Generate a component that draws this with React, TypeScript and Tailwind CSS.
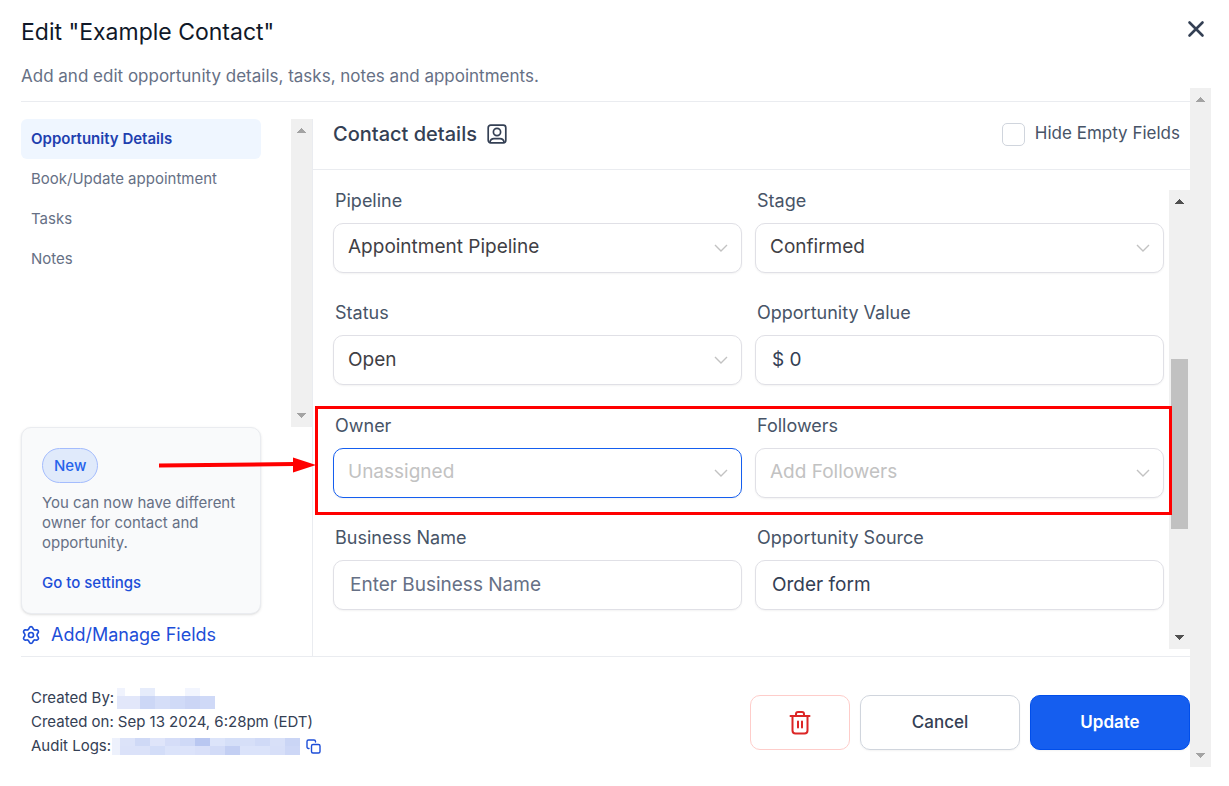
import { useState } from "react";
import type { ReactNode } from "react";

function ScrollArrow({ up, dark }: { up?: boolean; dark?: boolean }) {
  return (
    <svg
      width="9"
      height="5"
      viewBox="0 0 9 5"
      shapeRendering="crispEdges"
      className={dark ? "text-[#505050]" : "text-[#a3a3a3]"}
      aria-hidden="true"
    >
      <path d={up ? "M4.5 0 9 5H0z" : "M0 0H9L4.5 5z"} fill="currentColor" />
    </svg>
  );
}

function ScrollRail({ dark, children }: { dark?: boolean; children?: ReactNode }) {
  return (
    <div className="flex w-[21px] shrink-0 flex-col items-center justify-between bg-[#f0f0f0] pt-[9px] pb-[9px]" aria-hidden="true">
      <ScrollArrow up dark={dark} />
      {children}
      <ScrollArrow dark={dark} />
    </div>
  );
}

function Chevron() {
  return (
    <svg
      width="14"
      height="8"
      viewBox="0 0 14 8"
      fill="none"
      stroke="#c2c2c2"
      strokeWidth="1.4"
      className="pointer-events-none absolute top-[21px] right-[14px]"
      aria-hidden="true"
    >
      <path d="M1 1l6 6 6-6" />
    </svg>
  );
}

const label = "pl-[2px] text-[18px] leading-[22px] text-[#475467]";
const box = "h-[50px] w-full rounded-[10px] border bg-white pb-px text-[19px] shadow-xs outline-none";

function SelectField({
  id,
  name,
  options,
  placeholder,
  active,
}: {
  id: string;
  name: string;
  options: string[];
  placeholder?: boolean;
  active?: boolean;
}) {
  return (
    <div className="flex min-w-0 flex-col gap-[11px]">
      <label htmlFor={id} className={label}>
        {name}
      </label>
      <div className="relative">
        <select
          id={id}
          className={`${box} appearance-none pr-9 pl-[14px] ${active ? "border-[#155eef]" : "border-[#e0e0e6]"} ${placeholder ? "text-[#c2c2c2]" : "text-[#3f4045]"}`}
        >
          {options.map((o) => (
            <option key={o}>{o}</option>
          ))}
        </select>
        <Chevron />
      </div>
    </div>
  );
}

function TextField({ id, name, value, placeholder }: { id: string; name: string; value?: string; placeholder?: string }) {
  return (
    <div className="flex min-w-0 flex-col gap-[11px]">
      <label htmlFor={id} className={label}>
        {name}
      </label>
      <input
        id={id}
        type="text"
        defaultValue={value}
        placeholder={placeholder}
        className={`${box} border-[#e0e0e6] px-4 text-[#344054] placeholder:text-[#667085]`}
      />
    </div>
  );
}

const tabs = ["Opportunity Details", "Book/Update appointment", "Tasks", "Notes"];

type Cell = [number, number, number, number, string];

const creatorCells: Cell[] = [
  [0, 0, 8, 8, "#f0f3fd"],
  [23, 0, 15, 8, "#e6ecfb"],
  [68, 0, 15, 8, "#f2f5fe"],
  [0, 8, 23, 13, "#e2e7fa"],
  [23, 8, 15, 13, "#ccd7f6"],
  [38, 8, 15, 13, "#d5def8"],
  [53, 8, 15, 13, "#d0daf7"],
  [68, 8, 15, 13, "#cbd5f5"],
  [83, 8, 15, 13, "#cfd9f7"],
];

const logTop = ["#dce3f9", "#cfd9f6", "#dfe5fa", "#d5ddf8", "#cfd9f7", "#b9c7f1", "#dce4fa", "#d5dff8", "#d6dff8", "#d0daf7", "#d8e0f8", "#cad5f5"];
const logBottom = ["#dbe2f9", "#dbe2f9", "#d3ddf8", "#dbe3fa", "#dce3fa", "#d9e0f9", "#d2dbf7", "#c3cff3", "#dbe3fa", "#dbe3fa", "#d7dff8", "#cdd7f6"];
const logCells: Cell[] = [
  [0, 0, 8, 17, "#edf1fc"],
  ...logTop.map((c, i): Cell => [8 + i * 15, 0, 15, 8, c]),
  ...logBottom.map((c, i): Cell => [8 + i * 15, 8, 15, 9, c]),
];

function Mosaic({ width, height, cells }: { width: number; height: number; cells: Cell[] }) {
  return (
    <svg width={width} height={height} shapeRendering="crispEdges" aria-hidden="true">
      {cells.map(([x, y, w, h, c]) => (
        <rect key={`${x}-${y}`} x={x} y={y} width={w} height={h} fill={c} />
      ))}
    </svg>
  );
}

export default function App() {
  const [tab, setTab] = useState(tabs[0]);

  return (
    <div className="bg-white pr-[18px] pb-[19px] pl-[21px] font-['Inter',sans-serif] text-[#344054]">
      <header className="flex h-[88px] items-start justify-between">
        <div className="pt-[18px]">
          <h1 className="text-[23px] leading-7 text-[#101828]">Edit "Example Contact"</h1>
          <p className="mt-[18px] text-[17px] leading-6 text-[#667085]">
            Add and edit opportunity details, tasks, notes and appointments.
          </p>
        </div>
        <button type="button" aria-label="Close" className="mt-[19px] mr-[5px]">
          <svg width="20" height="20" viewBox="0 0 20 20" fill="none" stroke="#344054" strokeWidth="2.6" strokeLinecap="round">
            <path d="M3.5 3.5l13 13M16.5 3.5l-13 13" />
          </svg>
        </button>
      </header>

      <div className="flex">
        <main className="min-w-0 flex-1 pt-[13px]">
          <div className="flex border-y border-[#eaecf0]">
            <aside className="mt-[17px] flex w-[292px] shrink-0 flex-col border-r border-[#eaecf0]">
              <div className="flex h-[308px] justify-between">
                <nav className="flex w-[240px] flex-col">
                  {tabs.map((t) => (
                    <button
                      key={t}
                      type="button"
                      onClick={() => setTab(t)}
                      className={`h-10 rounded-md px-[10px] text-left text-[15px] ${t === tab ? "bg-[#eff6ff] font-semibold text-[#1e40af]" : "text-[#667085]"}`}
                    >
                      {t}
                    </button>
                  ))}
                </nav>
                <ScrollRail />
              </div>

              <section className="relative flex w-[240px] flex-col items-start rounded-[10px] border border-[#eaecf0] bg-[#f9fafb] px-5 py-5 text-[15px] leading-5 shadow-sm">
                <span className="rounded-full border border-[#a4bcfd] bg-[#e0eafb] px-[11px] py-[6px] leading-[21px] font-medium text-[#2563eb]">
                  New
                </span>
                <p className="mt-[10px] text-[#667085]">You can now have different owner for contact and opportunity.</p>
                <a href="#settings" className="mt-5 font-medium text-[#1d4ed8]">
                  Go to settings
                </a>
                <svg
                  className="pointer-events-none absolute top-[28px] left-[136px]"
                  width="160"
                  height="18"
                  viewBox="0 0 160 18"
                  aria-hidden="true"
                >
                  <path d="M1 7.5L136 6V10L1 11.5z" fill="#f00" />
                  <path d="M135 1.5L158 9L135 16.5z" fill="#f00" />
                </svg>
              </section>

              <a href="#fields" className="mt-[9px] mb-[9px] flex items-center gap-[10px] text-[18px] leading-6 text-[#1d4ed8]">
                <svg width="20" height="20" viewBox="0 0 24 24" fill="none" stroke="currentColor" strokeWidth="2" strokeLinecap="round" strokeLinejoin="round" aria-hidden="true">
                  <path d="M9.395 19.371l.585 1.315a2.213 2.213 0 004.045 0l.584-1.315a2.426 2.426 0 012.477-1.423l1.431.153a2.213 2.213 0 002.022-3.502l-.847-1.164a2.43 2.43 0 01-.455-1.435c0-.515.163-1.017.466-1.434l.847-1.164a2.212 2.212 0 00-2.022-3.502l-1.431.152a2.43 2.43 0 01-1.47-.312 2.43 2.43 0 01-1.004-1.117l-.589-1.315a2.213 2.213 0 00-4.044 0L9.4 4.623c-.207.468-.559.86-1.003 1.117-.445.256-.96.365-1.47.312l-1.436-.152a2.213 2.213 0 00-2.022 3.502l.847 1.164a2.43 2.43 0 010 2.868l-.847 1.164a2.211 2.211 0 002.022 3.502l1.431-.153a2.43 2.43 0 012.473 1.424z" />
                  <circle cx="12" cy="12" r="3" />
                </svg>
                Add/Manage Fields
              </a>
            </aside>

            <section className="min-w-0 flex-1">
              <div className="flex h-[68px] items-center justify-between border-b border-[#eaecf0] pr-[10px] pb-[3px] pl-5">
                <h2 className="flex items-center gap-[10px] text-[20px] font-medium text-[#344054]">
                  Contact details
                  <svg width="20" height="20" viewBox="0 0 20 20" fill="none" stroke="currentColor" strokeWidth="1.7" aria-hidden="true">
                    <rect x="1.2" y="1.2" width="17.6" height="17.6" rx="2.5" />
                    <circle cx="10" cy="8" r="3.6" />
                    <path d="M3 18c.4-2.400 1.800-3.400 4-3.400h6c2.200 0 3.600 1 4 3.400" />
                  </svg>
                </h2>
                <label className="flex items-center gap-[10px] text-[17px] text-[#475467]">
                  <input type="checkbox" className="size-[23px] appearance-none rounded-[5px] border border-[#d0d5dd] bg-white checked:bg-[#155eef]" />
                  Hide Empty Fields
                </label>
              </div>

              <div className="mt-5 mb-[7px] flex h-[459px] pl-5">
                <div className="relative mr-[5px] grid h-[449px] flex-1 auto-rows-fr grid-cols-2 gap-x-[13px]">
                  <SelectField id="pipeline" name="Pipeline" options={["Appointment Pipeline"]} />
                  <SelectField id="stage" name="Stage" options={["Confirmed"]} />
                  <SelectField id="status" name="Status" options={["Open"]} />
                  <TextField id="value" name="Opportunity Value" value="$ 0" />
                  <SelectField id="owner" name="Owner" options={["Unassigned"]} placeholder active />
                  <SelectField id="followers" name="Followers" options={["Add Followers"]} placeholder />
                  <TextField id="business" name="Business Name" placeholder="Enter Business Name" />
                  <TextField id="source" name="Opportunity Source" value="Order form" />
                  <div className="pointer-events-none absolute top-[216px] -right-2 -left-[18px] z-10 h-[109px] border-3 border-[#f00]" />
                </div>
                <ScrollRail dark>
                  <div className="mt-12 h-[170px] w-[17px] bg-[#c1c1c1]" />
                </ScrollRail>
              </div>
            </section>
          </div>

          <footer className="flex items-start justify-between">
            <dl className="pt-[29px] pl-[10px] text-[15px] leading-6">
              <div className="flex items-center gap-[3px]">
                <dt>Created By:</dt>
                <dd>
                  <Mosaic width={98} height={21} cells={creatorCells} />
                </dd>
              </div>
              <div className="flex gap-1">
                <dt>Created on:</dt>
                <dd>Sep 13 2024, 6:28pm (EDT)</dd>
              </div>
              <div className="flex items-center gap-px">
                <dt>Audit Logs:</dt>
                <dd className="flex items-center gap-[6px]">
                  <Mosaic width={188} height={17} cells={logCells} />
                  <button type="button" aria-label="Copy audit logs" className="text-[#1d4ed8]">
                    <svg width="15" height="15" viewBox="0 0 15 15" fill="none" stroke="currentColor" strokeWidth="1.4" strokeLinecap="round" strokeLinejoin="round">
                      <rect x="5.5" y="5.5" width="8.5" height="8.5" rx="1.5" />
                      <path d="M3 9.5H2.5A1.5 1.5 0 011 8V2.5A1.5 1.5 0 012.5 1H8a1.5 1.5 0 011.5 1.5V3" />
                    </svg>
                  </button>
                </dd>
              </div>
            </dl>
            <div className="flex gap-[10px] pt-[38px] pb-[17px] text-[17px]">
              <button type="button" aria-label="Delete" className="flex h-[55px] w-[100px] items-center justify-center rounded-[10px] border border-[#fecdca] text-[#dc2626]">
                <svg width="24" height="26" viewBox="0 0 24 26" fill="none" stroke="currentColor" strokeWidth="2" strokeLinecap="round" strokeLinejoin="round">
                  <path d="M2.500 6h19M8 6V4A2 2 0 0110 2h4a2 2 0 012 2V6M4.500 6v14.500a3 3 0 003 3h9a3 3 0 003-3V6M10 11.500v6M14 11.500v6" />
                </svg>
              </button>
              <button type="button" className="h-[55px] w-[160px] rounded-[10px] border border-[#d0d5dd] pt-px font-medium shadow-xs">
                Cancel
              </button>
              <button type="button" className="h-[55px] w-[160px] rounded-[10px] border border-[#004eeb] bg-[#155eef] pt-px font-semibold text-white shadow-xs">
                Update
              </button>
            </div>
          </footer>
        </main>
        <ScrollRail />
      </div>
    </div>
  );
}
